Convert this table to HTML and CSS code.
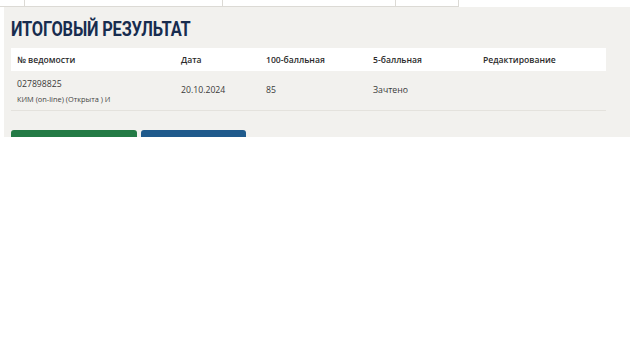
FILE: index.html
```html
<!DOCTYPE html>
<html lang="ru">
<head>
<meta charset="utf-8">
<title>Итоговый результат</title>
<link rel="stylesheet" href="styles.css">
</head>
<body>
<div class="tabs">
  <div class="tab tab-a"></div>
  <div class="tab tab-b"></div>
  <div class="tab tab-c"></div>
  <div class="tab tab-d"></div>
</div>
<section class="panel">
  <h1 class="title"><span class="title-text">ИТОГОВЫЙ РЕЗУЛЬТАТ</span></h1>
  <table class="results">
    <thead>
      <tr>
        <th class="c1">№ ведомости</th>
        <th class="c2">Дата</th>
        <th class="c3">100-балльная</th>
        <th class="c4">5-балльная</th>
        <th class="c5">Редактирование</th>
      </tr>
    </thead>
    <tbody>
      <tr>
        <td><div class="num">027898825</div><div class="sub">КИМ (on-line) (Открыта ) И</div></td>
        <td>20.10.2024</td>
        <td>85</td>
        <td>Зачтено</td>
        <td></td>
      </tr>
    </tbody>
  </table>
  <div class="actions">
    <button class="btn btn-green">Выгрузить результат</button>
    <button class="btn btn-blue">Отправить отчёт</button>
  </div>
</section>
</body>
</html>
```

FILE: styles.css
```css
html, body {
  margin: 0;
  padding: 0;
  background: #ffffff;
}

body {
  font-family: "Open Sans", "Noto Sans", sans-serif;
  color: #333333;
}

/* tab strip above the panel */
.tabs {
  display: flex;
  height: 6px;
  width: 459px;
  border-bottom: 1px solid #dcdad5;
}

.tab {
  height: 6px;
  border-right: 1px solid #dcdad5;
  box-sizing: border-box;
}

.tab-a { width: 25px; }
.tab-b { width: 198px; }
.tab-c { width: 173px; }
.tab-d { width: 63px; }

/* result panel */
.panel {
  margin-left: 4px;
  background: #f2f1ee;
  height: 130px;
  overflow: hidden;
  padding: 0 24px 0 7px;
}

.title {
  margin: 0;
  padding-top: 10px;
  font-family: Roboto, "Noto Sans", sans-serif;
  font-weight: 700;
  font-size: 20px;
  line-height: 25px;
  color: #172c4f;
  height: 31px;
}

/* narrow heading face */
.title-text {
  display: inline-block;
  letter-spacing: -0.2px;
  transform: scaleX(0.82);
  transform-origin: left center;
}

.results {
  width: 595px;
  border-collapse: collapse;
  font-size: 8.6px;
}

.results th {
  background: #ffffff;
  text-align: left;
  font-weight: 600;
  color: #2b2b2b;
  height: 23px;
  padding: 0 0 0 6px;
  box-sizing: border-box;
}

.results th.c1 { width: 164px; }
.results th.c2 { width: 85px; }
.results th.c3 { width: 107px; }
.results th.c4 { width: 110px; }

.results td {
  height: 39px;
  padding: 0 0 0 6px;
  border-bottom: 1px solid #e4e2dd;
  color: #3a3a3a;
  vertical-align: middle;
  box-sizing: border-box;
  font-size: 8.7px;
}

.num {
  font-size: 8.7px;
  line-height: 13px;
  padding-top: 2px;
}

.sub {
  font-size: 7.4px;
  line-height: 12px;
  margin-top: 2px;
  color: #444444;
}

.actions {
  display: flex;
  gap: 4px;
  margin-top: 19px;
}

.btn {
  height: 30px;
  border: 0;
  border-radius: 3px;
  color: #ffffff;
  font-family: "Open Sans", sans-serif;
  font-size: 12px;
  text-align: left;
  padding: 3px 10px 0;
}

.btn-green {
  width: 126px;
  background: #237a45;
}

.btn-blue {
  width: 105px;
  background: #1f5a8c;
}
```
